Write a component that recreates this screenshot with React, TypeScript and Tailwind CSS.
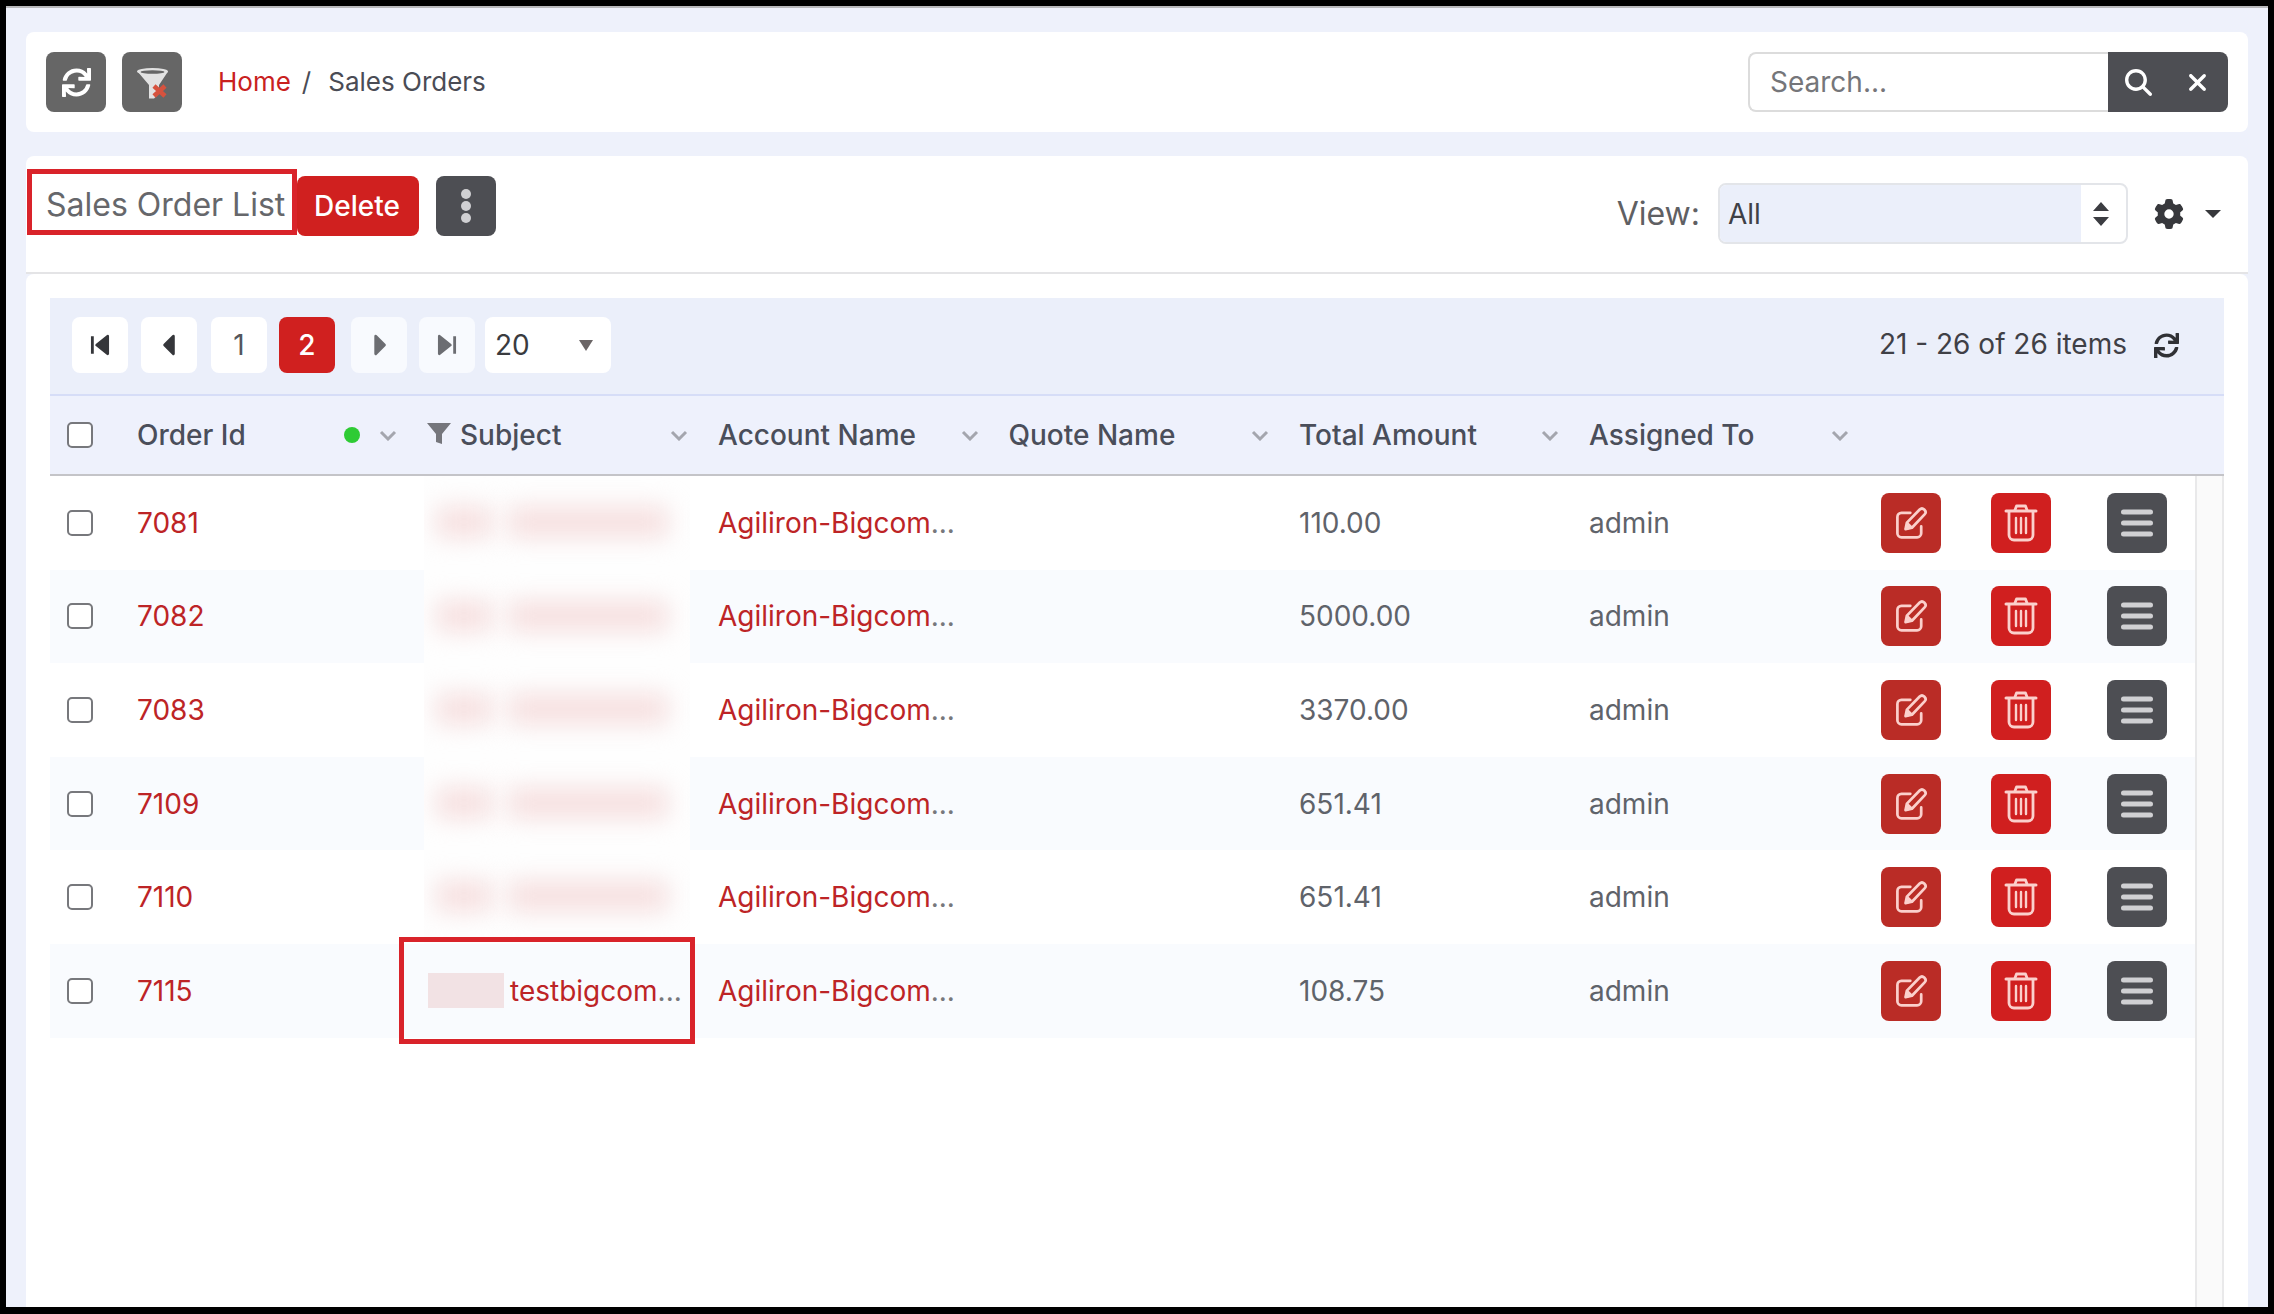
import React from "react";
import { FaSync } from "react-icons/fa";
import { FaGear, FaMagnifyingGlass, FaXmark } from "react-icons/fa6";

const Chevron = () => (
  <svg width="18" height="11" viewBox="0 0 18 11" className="shrink-0">
    <path d="M2 2l7 7 7-7" fill="none" stroke="#a4a6ae" strokeWidth="3" />
  </svg>
);

const EditIcon = () => (
  <svg width="34" height="34" viewBox="0 0 25 25" fill="none" stroke="#fbd0cc" strokeWidth="2" strokeLinecap="round" strokeLinejoin="round">
    <path d="M12 5H5.5a3 3 0 0 0-3 3v12a3 3 0 0 0 3 3H17a3 3 0 0 0 3-3v-5" />
    <path d="M8.5 17l1-4.8L18.9 2.6a2.4 2.4 0 0 1 3.3 0l.3.3a2.4 2.4 0 0 1 0 3.3L13.2 16z" />
    <path d="M9 16.5l1-3.5 2.5 2.5z" fill="#fbd0cc" />
  </svg>
);

const TrashIcon = () => (
  <svg width="34" height="38" viewBox="0 0 34 38" fill="none" stroke="#fbd0cc" strokeWidth="2.8" strokeLinecap="round" strokeLinejoin="round">
    <path d="M11 6l1.5-4h9L23 6" />
    <path d="M2 7h30" strokeWidth="3" />
    <path d="M5 8v23a5 5 0 0 0 5 5h14a5 5 0 0 0 5-5V8" />
    <path d="M12 14v15M17 14v15M22 14v15" strokeWidth="2.4" />
  </svg>
);

const MenuIcon = () => (
  <svg width="32" height="28" viewBox="0 0 32 28">
    <path d="M2.5 3h27M2.5 14h27M2.5 25h27" stroke="#d0d0d3" strokeWidth="5" strokeLinecap="round" />
  </svg>
);

const FilterClearIcon = () => (
  <svg width="60" height="60" viewBox="0 0 60 60">
    <path d="M15.5 19.5L27 33v13.5h5l5-5V33l9-13.5z" fill="#e2e2e2" />
    <ellipse cx="30.5" cy="19.5" rx="15.5" ry="3.4" fill="#e2e2e2" />
    <ellipse cx="30.5" cy="20" rx="12" ry="1.8" fill="#666666" />
    <path d="M32 34l11 10M43 34L32 44" stroke="#d6523e" strokeWidth="4.6" />
  </svg>
);

const Pager = ({ d, light }: { d: string; light?: boolean }) => (
  <svg width="22" height="24" viewBox="0 0 20 22">
    <path d={d} fill={light ? "#6c6d72" : "#35363a"} stroke={light ? "#6c6d72" : "#35363a"} strokeWidth="2.6" strokeLinejoin="round" />
  </svg>
);

const rows = [
  { id: "7081", amount: "110.00" },
  { id: "7082", amount: "5000.00" },
  { id: "7083", amount: "3370.00" },
  { id: "7109", amount: "651.41" },
  { id: "7110", amount: "651.41" },
  { id: "7115", amount: "108.75" },
];

const Check = () => (
  <input type="checkbox" className="appearance-none block w-[26px] h-[26px] bg-white border-2 border-[#77787c] rounded-[5px]" />
);

const SquareBtn = ({ bg, children }: { bg: string; children: React.ReactNode }) => (
  <button className={`w-[60px] h-[60px] rounded-[8px] flex items-center justify-center ${bg}`}>{children}</button>
);

export default function App() {
  return (
    <div className="w-[2274px] h-[1314px] overflow-hidden bg-black pt-[6px] px-[6px] pb-[7px] [font-family:Inter,sans-serif] text-[28px] text-[#5f636a]">
      <div className="h-full bg-[#eef1fb] border-t-2 border-[#b9b9bc] pt-[24px] px-[20px] flex flex-col">
        <div className="h-[100px] shrink-0 bg-white rounded-[8px] flex items-center justify-between pl-[20px] pr-[20px] mb-[24px]">
          <div className="flex items-center">
            <button className="w-[60px] h-[60px] rounded-[8px] bg-[#666666] flex items-center justify-center">
              <FaSync className="text-white" size={29} />
            </button>
            <button className="ml-[16px] w-[60px] h-[60px] rounded-[8px] bg-[#666666] flex items-center justify-center">
              <FilterClearIcon />
            </button>
            <div className="flex items-center mb-[2px]">
              <a className="ml-[36px] text-[#c9211e] text-[26px]">Home</a>
              <span className="ml-[11px] text-[#4a4c55] text-[26px]">/</span>
              <span className="ml-[17px] text-[#4a4c55] text-[26px]">Sales Orders</span>
            </div>
          </div>
          <div className="flex items-center h-[60px]">
            <div className="w-[360px] h-full border-2 border-[#dcdcdc] border-r-0 rounded-l-[8px] flex items-center pl-[20px] text-[#75767a] text-[28px]">Search...</div>
            <div className="w-[120px] h-full bg-[#4d4e53] rounded-r-[8px] flex items-center text-white">
              <FaMagnifyingGlass size={27} className="ml-[17px]" />
              <FaXmark size={27} className="ml-[32px]" />
            </div>
          </div>
        </div>

        <div className="h-[118px] shrink-0 bg-white rounded-t-[8px] border-b-2 border-[#e4e4e6] flex justify-between">
          <div className="flex items-start pt-[13px] pl-[1px]">
            <h1 className="h-[66px] w-[270px] border-[5px] border-[#d9232a] flex items-center pl-[14px] pt-[5px] text-[#66676b] text-[32px] font-normal whitespace-nowrap">Sales Order List</h1>
            <button className="mt-[7px] w-[122px] h-[60px] bg-[#d0201f] rounded-[8px] text-white text-[28px] font-medium pr-[2px]">Delete</button>
            <button className="mt-[7px] ml-[17px] w-[60px] h-[60px] bg-[#4d4e53] rounded-[8px] flex items-center justify-center">
              <svg width="12" height="36" viewBox="0 0 12 36" fill="#d0d0d3">
                <circle cx="6" cy="6" r="5" />
                <circle cx="6" cy="18" r="5" />
                <circle cx="6" cy="30" r="5" />
              </svg>
            </button>
          </div>
          <div className="flex items-center pr-[27px] pb-[1px]">
            <span className="text-[32px] text-[#5f6063]">View:</span>
            <div className="ml-[18px] w-[410px] h-[61px] border-2 border-[#e3e5e9] rounded-[8px] flex overflow-hidden bg-white">
              <div className="w-[361px] bg-[#ebeffa] flex items-center pl-[8px] text-[#3f4046]">All</div>
              <div className="flex-1 flex items-center justify-center pr-[5px]">
                <svg width="18" height="24" viewBox="0 0 18 24" fill="#3c3d42">
                  <path d="M9 0l8 9H1zM9 24L1 15h16z" />
                </svg>
              </div>
            </div>
            <FaGear size={30} className="ml-[26px] text-[#37383c]" />
            <svg width="16" height="8" viewBox="0 0 16 8" fill="#37383c" className="ml-[21px]">
              <path d="M0 0h16L8 8z" />
            </svg>
          </div>
        </div>

        <div className="flex-1 min-h-0 bg-white px-[24px] pt-[24px] flex flex-col rounded-t-[8px]">
          <div className="h-[98px] shrink-0 bg-[#ebeffa] border-b-2 border-[#d6ddf7] flex items-center justify-between pl-[22px] pr-[45px] pb-[2px]">
            <div className="flex items-center text-[#55565c]">
              <div className="w-[56px] h-[56px] rounded-[8px] bg-white flex items-center justify-center"><Pager d="M3 3v16M17 3L7 11l10 8z" /></div>
              <div className="ml-[13px] w-[56px] h-[56px] rounded-[8px] bg-white flex items-center justify-center"><Pager d="M14 3L6 11l8 8z" /></div>
              <div className="ml-[14px] w-[56px] h-[56px] rounded-[8px] bg-white flex items-center justify-center">1</div>
              <div className="ml-[12px] w-[56px] h-[56px] rounded-[8px] bg-[#d0201f] text-white font-medium flex items-center justify-center">2</div>
              <div className="ml-[16px] w-[56px] h-[56px] rounded-[8px] bg-[#f8fafe] flex items-center justify-center"><Pager light d="M7 3l8 8-8 8z" /></div>
              <div className="ml-[12px] w-[56px] h-[56px] rounded-[8px] bg-[#f8fafe] flex items-center justify-center"><Pager light d="M3 3l10 8-10 8zM17 3v16" /></div>
              <div className="ml-[10px] w-[126px] h-[56px] rounded-[8px] bg-white flex items-center justify-between pl-[10px] pr-[18px] text-[#3a3b3f]">
                <span>20</span>
                <svg width="14" height="11" viewBox="0 0 14 11" fill="#6b6566"><path d="M0 0h14L7 11z" /></svg>
              </div>
            </div>
            <div className="flex items-center text-[#3f4046]">
              <span className="mb-[2px]">21 - 26 of 26 items</span>
              <FaSync size={25} className="ml-[27px] text-[#303135]" />
            </div>
          </div>

          <div className="h-[80px] shrink-0 bg-[#eef1fc] border-b-2 border-[#c4c4c8] flex items-center font-medium text-[#4a4e5a]">
            <div className="w-[87px] pl-[17px]"><Check /></div>
            <div className="w-[287px] flex items-center pr-[27px]">
              <span className="flex-1">Order Id</span>
              <span className="w-[16px] h-[16px] rounded-full bg-[#2ecb34] mr-[19px]" />
              <Chevron />
            </div>
            <div className="w-[294px] flex items-center pl-[3px] pr-[30px]">
              <svg width="24" height="21" viewBox="0 0 24 21" fill="#75767c" className="mb-[4px]"><path d="M0 0h24L15 11v10l-6-2v-8z" /></svg>
              <span className="flex-1 ml-[9px]">Subject</span>
              <Chevron />
            </div>
            <div className="w-[290.5px] flex items-center pr-[30px]"><span className="flex-1">Account Name</span><Chevron /></div>
            <div className="w-[290.5px] flex items-center pr-[30px]"><span className="flex-1">Quote Name</span><Chevron /></div>
            <div className="w-[290px] flex items-center pr-[30px]"><span className="flex-1">Total Amount</span><Chevron /></div>
            <div className="w-[292px] flex items-center pr-[32px]"><span className="flex-1">Assigned To</span><Chevron /></div>
          </div>

          <div className="flex-1 min-h-0 flex">
            <div className="w-[2145px]">
              {rows.map((r, i) => (
                <div key={r.id} className={`h-[93.6px] flex items-center ${i % 2 === 1 ? "bg-[#f9fbfe]" : "bg-white"}`}>
                  <div className="w-[87px] pl-[17px]"><Check /></div>
                  <div className="w-[287px] text-[#bd2426]">{r.id}</div>
                  <div className="w-[294px] h-full relative">
                    {i < 5 ? (
                      <div className="w-[266px] h-full bg-[#fefefe] overflow-hidden relative flex items-center">
                        <div className="absolute left-[12px] top-[30px] w-[56px] h-[32px] bg-[#f6e0e0] blur-[12px]" />
                        <div className="absolute left-[84px] top-[30px] w-[160px] h-[32px] bg-[#f6e0e0] blur-[12px]" />
                      </div>
                    ) : (
                      <>
                        <div className="h-full flex items-center pl-[4px]">
                          <div className="w-[76px] h-[35px] bg-[#f2e2e4]" />
                          <span className="ml-[6px] text-[#bd2426]">testbigcom</span>
                          <span className="text-[#77787c]">...</span>
                        </div>
                        <div className="absolute left-[-25px] top-[-7px] w-[296px] h-[107px] border-[5px] border-[#d9232a]" />
                      </>
                    )}
                  </div>
                  <div className="w-[290.5px]"><span className="text-[#bd2426]">Agiliron-Bigcom</span><span className="text-[#77787c]">...</span></div>
                  <div className="w-[290.5px]" />
                  <div className="w-[290px]">{r.amount}</div>
                  <div className="w-[292px]">admin</div>
                  <div className="w-[110px]"><SquareBtn bg="bg-[#ba2c26]"><EditIcon /></SquareBtn></div>
                  <div className="w-[116px]"><SquareBtn bg="bg-[#d01f1f]"><TrashIcon /></SquareBtn></div>
                  <div className="w-[88px]"><SquareBtn bg="bg-[#4d4e53]"><MenuIcon /></SquareBtn></div>
                </div>
              ))}
            </div>
            <div className="flex-1 bg-[#fafafa] border-x-2 border-[#e9e9ea]" />
          </div>
        </div>
      </div>
    </div>
  );
}
